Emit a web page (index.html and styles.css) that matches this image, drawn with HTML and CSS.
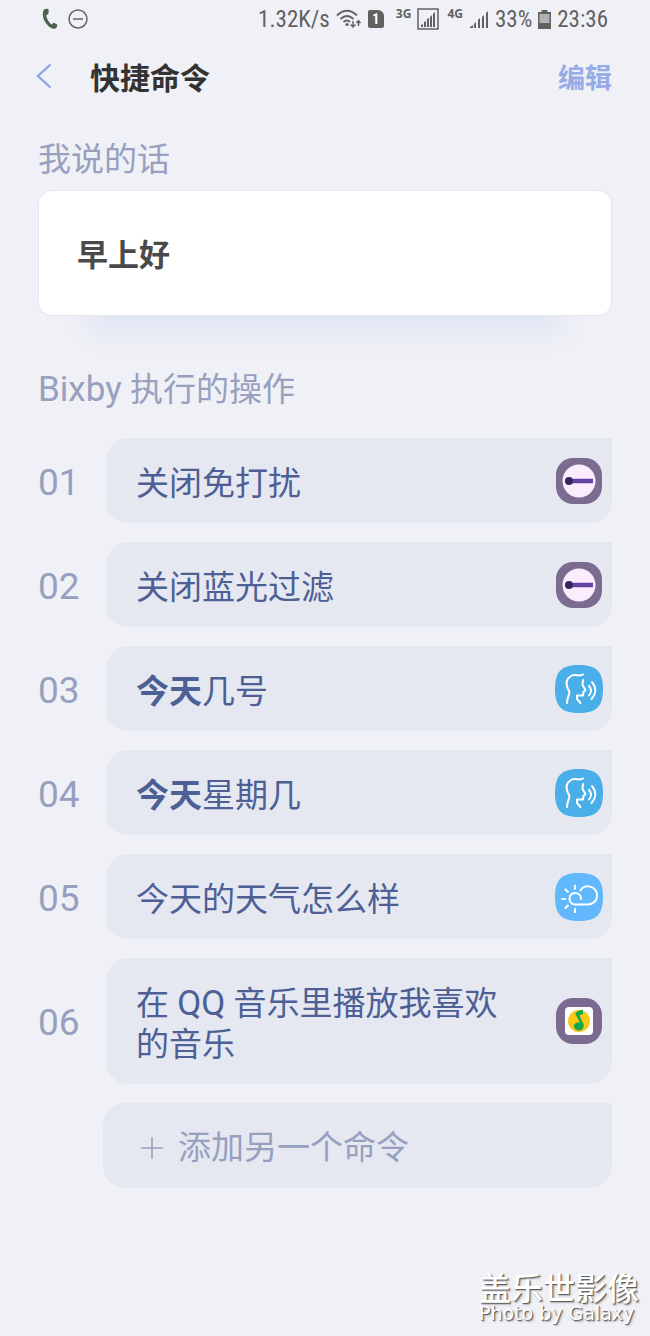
FILE: index.html
```html
<!DOCTYPE html>
<html lang="zh-CN">
<head>
    <meta charset="UTF-8" />
    <meta name="viewport" content="width=device-width, initial-scale=1" />
    <title>快捷命令</title>

    <link rel="stylesheet" href="styles.css">
</head>
<body>

    <!-- 状态栏 -->
    <div class="status-bar">
        <div class="status-left">
            <svg width="16" height="22" viewBox="0 0 16 22">
                <path d="M2 1.500C4 .3 6.500 .6 6.700 2L6.500 5.500C6.200 7 4.500 6.500 4.300 7.500C4.500 11 7 14.500 9.500 16.500C10.500 16.500 10.800 14.700 12 14.800L15 16.500C16 17.500 14.500 20.500 12.500 20.800C6 21-2.500 9 2 1.500z" fill="#4d6350"/>
            </svg>
            <svg width="20" height="20" viewBox="0 0 20 20" fill="none" stroke="#666" stroke-width="1.500">
                <circle cx="10" cy="10" r="9"/>
                <path d="M5 10h10"/>
            </svg>
        </div>
        <div class="status-right">
            <span>1.32K/s</span>
            <svg width="26" height="20" viewBox="0 0 26 20" fill="none" stroke="#616161" stroke-width="1.800">
                <path d="M1 6.500Q11 -3 21 6.500M4.500 10Q11 4 17.500 10M7.500 13Q11 10 14 13"/>
                <circle cx="11" cy="15.500" r="1.600" fill="#616161" stroke="none"/>
                <path d="M17 12v6M14.500 15.500l2.500 2.500 2.500-2.500M22.500 17v-5.500M20.500 14l2-2.500 2 2.500" stroke-width="1.400"/>
            </svg>
            <span class="sim">1</span>
            <small class="net">3G</small>
            <svg width="22" height="22" viewBox="0 0 22 22">
                <rect x="1" y="1" width="20" height="20" fill="none" stroke="#616161" stroke-width="1.500"/>
                <path d="M4 19v-2l2-1v3zM7 19v-5l2-1v6zM10 19v-8l2-1v9zM13 19V9l2-2v12zM16 19V6l2-2v15z" fill="#616161"/>
            </svg>
            <small class="net">4G</small>
            <svg width="20" height="20" viewBox="0 0 20 20">
                <path d="M1 19v-1l3-2v3zM5 19v-4l2-2v6zM9 19v-8l2-2v10zM13 19V8l2-2v13zM17 19V4l2-2v17z" fill="#616161"/>
            </svg>
            <span>33%</span>
            <svg width="13" height="19" viewBox="0 0 13 19">
                <path d="M3.500 0h6v2H13v17H0V2h3.500z" fill="#616161"/>
                <path d="M1.500 4h10v9h-10z" fill="#b0b1b3"/>
            </svg>
            <span>23:36</span>
        </div>
    </div>

    <!-- 标题栏 -->
    <header class="header">
        <button class="back-btn" aria-label="返回">
            <svg width="16" height="26" viewBox="0 0 16 26" fill="none" stroke="#8ba3e0" stroke-width="2.300">
                <path d="M14.500 1.500L2 13l12.500 11.500"/>
            </svg>
        </button>
        <h1>快捷命令</h1>
        <button class="edit-btn">编辑</button>
    </header>

    <main class="container">
        <h2>我说的话</h2>
        <p class="phrase">早上好</p>

        <h2 class="actions-title"><span class="latin">Bixby</span> 执行的操作</h2>

        <ol class="actions">
            <li>
                <span class="num">01</span>
                <div class="card">
                    <p>关闭免打扰</p>
                    <svg class="icon" viewBox="0 0 48 48">
                        <rect x="1" y="1" width="46" height="46" rx="17" fill="#7b6b91"/>
                        <circle cx="24" cy="24" r="16.500" fill="#fbedfd"/>
                        <path d="M14 24h24" stroke="#6345a0" stroke-width="4.500"/>
                        <circle cx="14" cy="24" r="4" fill="#38235f"/>
                    </svg>
                </div>
            </li>
            <li>
                <span class="num">02</span>
                <div class="card">
                    <p>关闭蓝光过滤</p>
                    <svg class="icon" viewBox="0 0 48 48">
                        <rect x="1" y="1" width="46" height="46" rx="17" fill="#7b6b91"/>
                        <circle cx="24" cy="24" r="16.500" fill="#fbedfd"/>
                        <path d="M14 24h24" stroke="#6345a0" stroke-width="4.500"/>
                        <circle cx="14" cy="24" r="4" fill="#38235f"/>
                    </svg>
                </div>
            </li>
            <li>
                <span class="num">03</span>
                <div class="card">
                    <p><b>今天</b>几号</p>
                    <svg class="icon" viewBox="0 0 48 48">
                        <path d="M24 0C41 0 48 6 48 24S41 48 24 48 0 42 0 24 7 0 24 0z" fill="#4aaee8"/>
                        <path d="M28 9.500C25 12 20 8.500 16 11C10 14.500 10.500 20 14.500 27C14 31 12 33 12 38M28 15L27.500 20L30.500 25L28.500 27L28 30.500H22V34L25.500 38M34 21Q38 25.500 34 30.500M37 17Q44 25.500 36.500 34" fill="none" stroke="#fff" stroke-width="2" stroke-linecap="round" stroke-linejoin="round"/>
                    </svg>
                </div>
            </li>
            <li>
                <span class="num">04</span>
                <div class="card">
                    <p><b>今天</b>星期几</p>
                    <svg class="icon" viewBox="0 0 48 48">
                        <path d="M24 0C41 0 48 6 48 24S41 48 24 48 0 42 0 24 7 0 24 0z" fill="#4aaee8"/>
                        <path d="M28 9.500C25 12 20 8.500 16 11C10 14.500 10.500 20 14.500 27C14 31 12 33 12 38M28 15L27.500 20L30.500 25L28.500 27L28 30.500H22V34L25.500 38M34 21Q38 25.500 34 30.500M37 17Q44 25.500 36.500 34" fill="none" stroke="#fff" stroke-width="2" stroke-linecap="round" stroke-linejoin="round"/>
                    </svg>
                </div>
            </li>
            <li>
                <span class="num">05</span>
                <div class="card">
                    <p>今天的天气怎么样</p>
                    <svg class="icon" viewBox="0 0 48 48">
                        <path d="M24 0C41 0 48 6 48 24S41 48 24 48 0 42 0 24 7 0 24 0z" fill="#61b8fd"/>
                        <path d="M26 26C26 18 14 18 14.500 26C14.500 29 17 31.500 20 31.500H33C38 31.500 42 28 42 22.500C42 13 29 10 25.500 17.500" fill="none" stroke="#fff" stroke-width="2" stroke-linecap="round"/>
                        <path d="M20 12v4.500M20 35v5M6.500 26h4.500M10 16l3.500 3.500M10 35.500l3.500-3.500" stroke="#fff" stroke-width="2"/>
                    </svg>
                </div>
            </li>
            <li>
                <span class="num">06</span>
                <div class="card">
                    <p>在 <span class="latin">QQ</span> 音乐里播放我喜欢的音乐</p>
                    <svg class="icon" viewBox="0 0 48 48">
                        <rect x="1" y="1" width="46" height="46" rx="17" fill="#7b6b91"/>
                        <rect x="10" y="10" width="28" height="28" rx="4" fill="#fff"/>
                        <circle cx="24" cy="24" r="11" fill="#fbc816"/>
                        <path d="M28 12.500V17C26.500 18 24.500 18 24.500 18.500L28.500 27C29.500 31 27 33.500 24 33.500C20.500 33.500 18.500 31 19 28.500C19.500 26 22.500 24.500 25 25.500L20.500 17.500C20 14.500 24 14 28 12.500z" fill="#16a84a"/>
                    </svg>
                </div>
            </li>
        </ol>

        <button class="add-btn">
            <svg width="24" height="24" viewBox="0 0 24 24" stroke="#97a0bf" stroke-width="1.500">
                <path d="M1 12h22M12 1v22"/>
            </svg>
            添加另一个命令
        </button>
    </main>

    <!-- 水印 -->
    <footer class="watermark">
        <p class="brand">盖乐世影像</p>
        <p class="sub">Photo by Galaxy</p>
    </footer>

</body>
</html>
```
FILE: styles.css
```css
* {
    box-sizing: border-box;
}
body {
    font-family: Roboto, "Noto Sans CJK SC", sans-serif;
    background-color: #f0f1f6;
    color: #4d5f94;
    margin: 0;
    min-height: 100vh;
    display: flex;
    flex-direction: column;
}
h1, h2, p, ol {
    margin: 0;
    padding: 0;
}
button {
    font: inherit;
    border: none;
    background: none;
    padding: 0;
    cursor: pointer;
}
svg {
    display: block;
    flex-shrink: 0;
}

/* 状态栏 */
.status-bar {
    display: flex;
    justify-content: space-between;
    align-items: center;
    height: 38px;
    padding: 0 42px;
    font-family: "Roboto Condensed", Roboto, sans-serif;
    font-size: 23px;
    color: #616161;
}
.status-left, .status-right {
    display: flex;
    align-items: center;
}
.status-left {
    gap: 10px;
}
.status-right {
    gap: 6px;
}
.sim {
    width: 16px;
    height: 18px;
    line-height: 18px;
    margin-right: 4px;
    border-radius: 2px 6px 2px 2px;
    background-color: #616161;
    color: #fff;
    font-size: 14px;
    font-weight: bold;
    text-align: center;
}
.net {
    align-self: flex-start;
    margin-left: 2px;
    font-family: "Noto Sans", sans-serif;
    font-size: 12px;
    line-height: 16px;
    font-weight: bold;
}

/* 标题栏 */
.header {
    display: flex;
    align-items: center;
    height: 76px;
    padding: 0 38px 0 36px;
}
.header h1 {
    flex: 1;
    margin-left: 38px;
    font-size: 30px;
    font-weight: 700;
    color: #333;
}
.edit-btn {
    font-size: 27px;
    font-weight: 700;
    color: #97abe6;
}

.container {
    padding: 24px 38px 0;
}
h2 {
    font-size: 33px;
    line-height: 44px;
    font-weight: 400;
    color: #97a0bf;
}
.latin {
    font-size: 35px;
}
.phrase {
    margin-top: 8px;
    padding: 43px 38px 37px;
    border: 1px solid #e6e7eb;
    border-radius: 14px;
    background-color: #fff;
    box-shadow: 0 62px 32px -50px #d8def2;
    font-size: 31px;
    line-height: 44px;
    font-weight: 700;
    color: #4a4a4a;
}
.actions-title {
    margin-top: 52px;
}

/* 操作列表 */
.actions {
    display: flex;
    flex-direction: column;
    gap: 19px;
    margin-top: 26px;
    list-style: none;
}
.actions li {
    display: flex;
    align-items: center;
}
.num {
    width: 68px;
    padding-top: 3px;
    font-size: 37px;
    color: #97a0bf;
}
.card {
    flex: 1;
    display: flex;
    align-items: center;
    justify-content: space-between;
    gap: 32px;
    padding-right: 9px;
    border-radius: 22px 0 22px 22px;
    background-color: #e5e8f1;
    font-size: 33px;
    line-height: 41px;
}
.card p {
    padding: 25px 0 19px 30px;
}
.card .latin {
    line-height: 1;
}
.icon {
    width: 48px;
    height: 48px;
}
.add-btn {
    display: flex;
    align-items: center;
    gap: 14px;
    width: calc(100% - 65px);
    margin: 19px 0 0 65px;
    padding: 24px 37px 20px;
    border-radius: 22px 0 22px 22px;
    background-color: #e5e8f1;
    color: #97a0bf;
    font-size: 33px;
    line-height: 41px;
}

/* 水印 */
.watermark {
    margin-top: auto;
    align-self: flex-end;
    padding: 0 11px 12px;
    color: #fff;
    text-shadow: 1px 1px 1px #555, 2px 2px 2px #bbb;
}
.brand {
    font-size: 32px;
    line-height: 26px;
    font-weight: 500;
}
.sub {
    font-family: "DejaVu Sans", sans-serif;
    font-size: 19px;
    line-height: 22px;
}
```
